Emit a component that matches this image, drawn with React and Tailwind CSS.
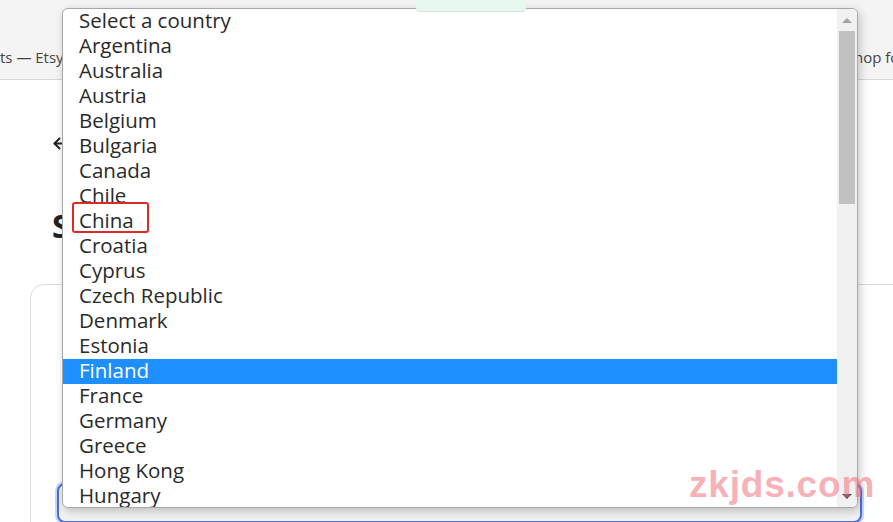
import React from "react";
import { ArrowLeft } from "lucide-react";

const countries = [
  "Select a country",
  "Argentina",
  "Australia",
  "Austria",
  "Belgium",
  "Bulgaria",
  "Canada",
  "Chile",
  "China",
  "Croatia",
  "Cyprus",
  "Czech Republic",
  "Denmark",
  "Estonia",
  "Finland",
  "France",
  "Germany",
  "Greece",
  "Hong Kong",
  "Hungary",
];

export default function App() {
  return (
    <div
      className="relative w-[893px] h-[522px] overflow-hidden bg-white"
      style={{ fontFamily: '"Open Sans", "Noto Sans", Arial, sans-serif' }}
    >
      {/* header */}
      <header className="h-[80px] bg-[#f4f4f4] border-b border-[#d6d6d6] flex items-end pb-[11px] text-[15px] text-[#444] whitespace-nowrap">
        <span>ts — Etsy Seller Handbook</span>
        <span className="ml-auto mr-[-55px]">Shop for items</span>
      </header>

      {/* page content */}
      <main className="flex flex-col pl-[30px]">
        <div className="pl-[21px] pt-[55px] text-[#222]">
          <ArrowLeft size={17} strokeWidth={2.8} />
        </div>
        <h1 className="pl-[22px] pt-[58px] text-[32px] font-bold leading-none text-[#222]">
          Shop preferences
        </h1>
        <section className="mt-[42px] w-[900px] h-[260px] border border-[#dcdcdc] rounded-[14px] bg-white pt-[198px] pl-[26px]">
          <div className="w-[805px] h-[40px] rounded-[8px] border-2 border-[#4a6fd8] bg-[#f2f2f2] shadow-[0_0_0_2px_#c9d6fb]"></div>
        </section>
      </main>

      {/* dropdown listbox */}
      <div className="absolute left-[62px] top-[8px] w-[796px] h-[500px] flex bg-white border border-[#a8a8a8] rounded-[6px] shadow-[2px_3px_10px_rgba(0,0,0,0.22)] overflow-hidden">
        <ul className="relative flex-1 flex flex-col">
          {countries.map((c) => (
            <li
              key={c}
              className={
                c === "Finland"
                  ? "h-[25px] shrink-0 flex items-center pl-[16px] pb-[3px] text-[20.5px] leading-none bg-[#1e8fff] text-white"
                  : "h-[25px] shrink-0 flex items-center pl-[16px] pb-[3px] text-[20.5px] leading-none text-[#2a2a2a]"
              }
            >
              {c}
            </li>
          ))}
          <div className="absolute left-[9px] top-[193px] w-[77px] h-[31px] border-[2.5px] border-[#dc2a2b] rounded-[3px]"></div>
        </ul>
        <div className="w-[20px] bg-[#f1f1f1] flex flex-col items-center">
          <div className="h-[22px] flex items-center justify-center">
            <div className="w-0 h-0 border-l-[5px] border-r-[5px] border-b-[5px] border-l-transparent border-r-transparent border-b-[#a3a3a3]"></div>
          </div>
          <div className="w-[16px] h-[173px] bg-[#c1c1c1]"></div>
          <div className="flex-1"></div>
          <div className="h-[22px] flex items-center justify-center">
            <div className="w-0 h-0 border-l-[5px] border-r-[5px] border-t-[5px] border-l-transparent border-r-transparent border-t-[#505050]"></div>
          </div>
        </div>
      </div>

      {/* green toast tab */}
      <div className="absolute left-[416px] top-0 w-[110px] h-[12px] bg-[#e6f8ef] rounded-b-[4px] border-b border-[#d2e8dc]"></div>

      {/* watermark */}
      <div
        className="absolute left-[689px] top-[466px] text-[37px] font-bold leading-none text-[rgba(242,110,120,0.55)] tracking-[0.8px]"
        style={{ fontFamily: '"Liberation Sans", Arial, sans-serif' }}
      >
        zkjds.com
      </div>
    </div>
  );
}
